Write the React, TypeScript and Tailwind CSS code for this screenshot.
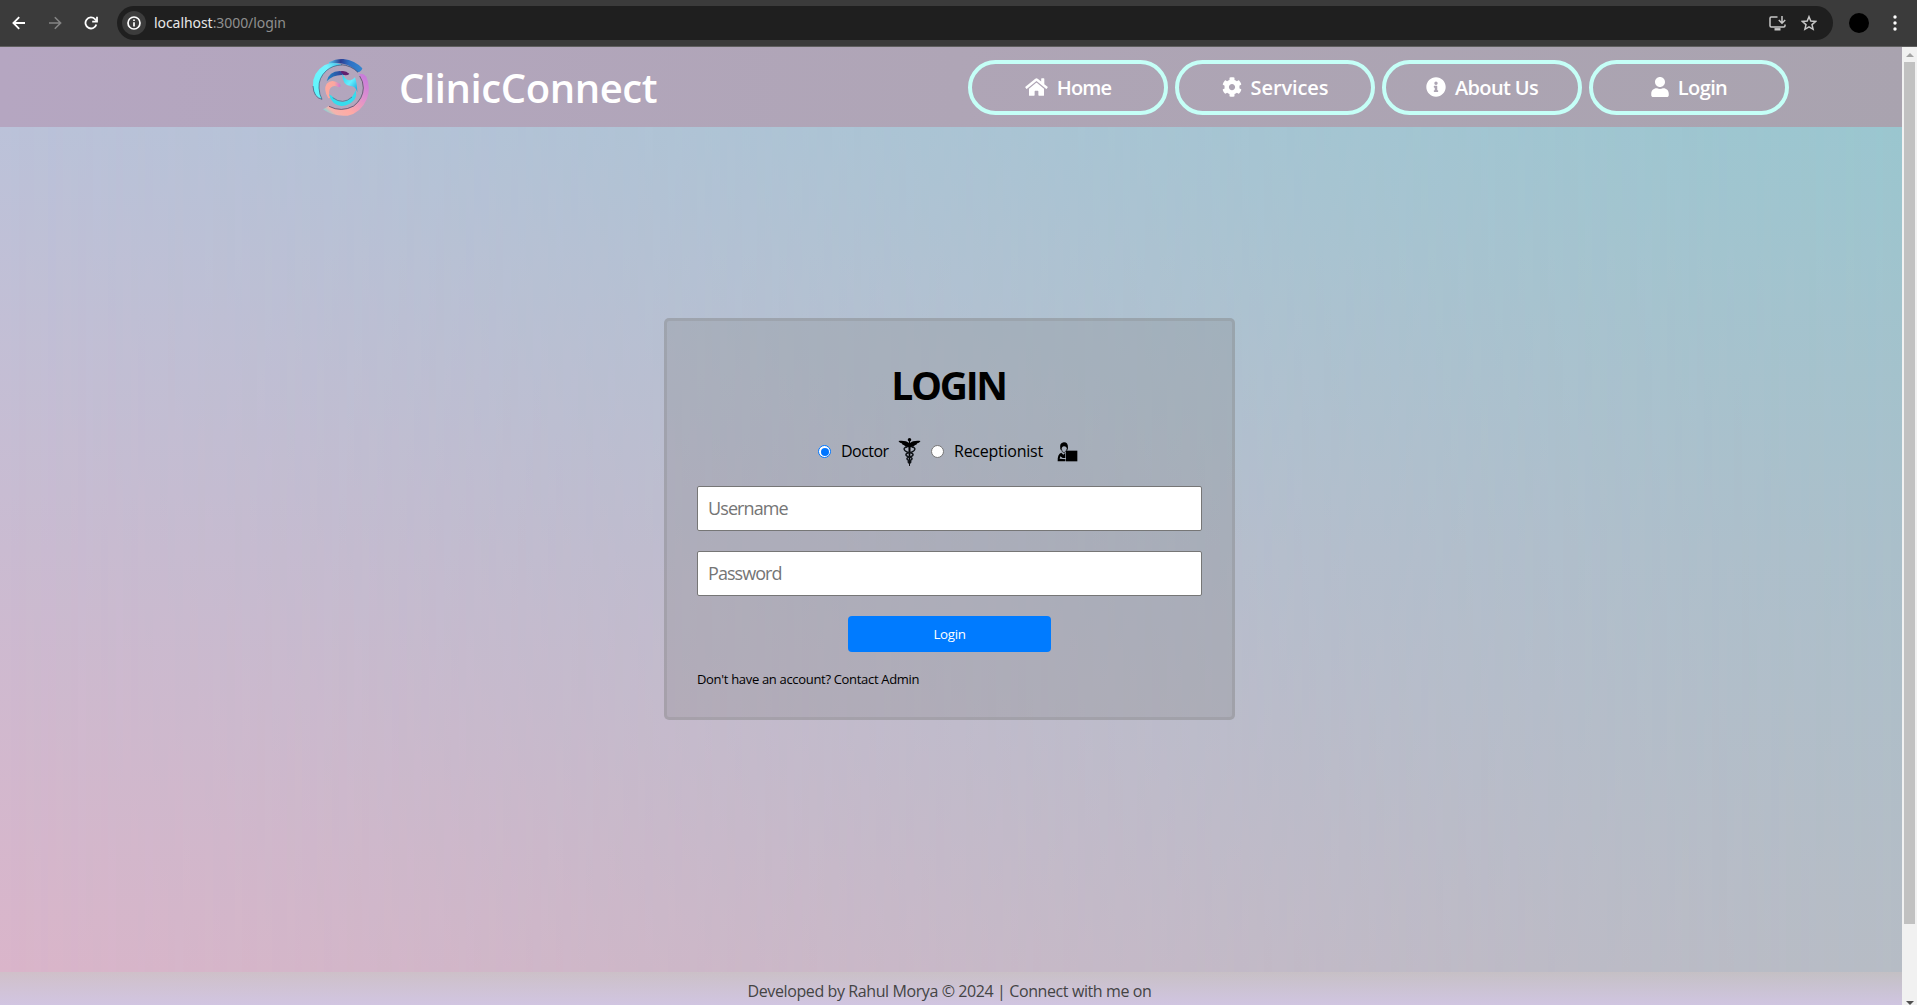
import type { ReactNode } from "react";
import { FaCog, FaHome, FaInfoCircle, FaUser } from "react-icons/fa";

function BrowserBar() {
  return (
    <div className="flex h-[47px] shrink-0 items-center border-b border-[#5f5f5f] bg-[#3b3b3b] font-['Noto_Sans',sans-serif]">
      <div className="flex w-[117px] items-center pl-3 text-white">
        <svg className="h-[14px] w-[14px]" viewBox="0 0 14 14" fill="none" stroke="currentColor" strokeWidth="1.8">
          <path d="M13 7H2M7.2 1.2 1.4 7l5.8 5.8" />
        </svg>
        <svg className="ml-[22px] h-[14px] w-[14px] text-[#858585]" viewBox="0 0 14 14" fill="none" stroke="currentColor" strokeWidth="1.6">
          <path d="M1 7h11M6.8 1.2 12.6 7l-5.8 5.8" />
        </svg>
        <svg className="ml-[22px] h-[14px] w-[14px]" viewBox="0 0 14 14" fill="none" stroke="currentColor" strokeWidth="1.8">
          <path d="M12.3 8.4A5.5 5.5 0 1 1 11 3.2l1.6 1.6" />
          <path d="M13 .8v4.8H8.2" />
        </svg>
      </div>
      <div className="flex h-[34px] w-[1716px] items-center rounded-full bg-[#1f1f1f] pl-[5px] pr-4">
        <div className="flex h-6 w-6 items-center justify-center rounded-full bg-[#3c3c3c] text-white">
          <svg className="h-[14px] w-[14px]" viewBox="0 0 14 14" fill="none" stroke="currentColor" strokeWidth="1.7">
            <circle cx="7" cy="7" r="6" />
            <path d="M7 6.2v4.2M7 3.4v1.7" />
          </svg>
        </div>
        <p className="ml-[8px] text-sm leading-5 tracking-[-0.06px] text-[#8f8f8f]">
          <span className="text-[#e8e8e8]">localhost</span>:3000/login
        </p>
        <svg className="ml-auto h-[15px] w-[17px] text-[#c7c7c7]" viewBox="0 0 17 15" fill="none" stroke="currentColor" strokeWidth="1.5">
          <path d="M8.5 1H2.2Q1 1 1 2.2v7.6Q1 11 2.2 11h12.6Q16 11 16 9.800V8.500" />
          <path d="M13 0v7M9.800 4l3.200 3.200L16.200 4" />
          <path d="M5.500 13.300h6" strokeWidth="2.400" />
        </svg>
        <svg className="ml-[15px] h-4 w-4 text-[#c7c7c7]" viewBox="0 0 16 16" fill="none" stroke="currentColor" strokeWidth="1.5">
          <path d="m8 1.700 1.800 4.400 4.800.4-3.600 3.100 1.100 4.700L8 11.800l-4.100 2.500L5 9.600 1.400 6.500l4.800-.4z" />
        </svg>
      </div>
      <div className="ml-4 h-5 w-5 rounded-full bg-black" />
      <svg className="ml-[24px] h-4 w-1" viewBox="0 0 4 16" fill="#fff">
        <circle cx="2" cy="2" r="1.700" />
        <circle cx="2" cy="8" r="1.700" />
        <circle cx="2" cy="14" r="1.700" />
      </svg>
    </div>
  );
}

function Logo() {
  return (
    <svg className="h-[75px] w-20" viewBox="0 0 240 225">
      <defs>
        <linearGradient id="ringBlue" x1="0" x2="1" y1="0" y2="0">
          <stop offset="0" stopColor="#55c8ee" />
          <stop offset=".35" stopColor="#2b3d92" />
          <stop offset=".6" stopColor="#2d6fc4" />
          <stop offset="1" stopColor="#3487cf" />
        </linearGradient>
        <linearGradient id="ringCyan" x1="0" x2="1" y1="1" y2="0">
          <stop offset="0" stopColor="#5cf6fb" />
          <stop offset=".7" stopColor="#74f2ff" />
          <stop offset="1" stopColor="#38b9e8" />
        </linearGradient>
        <linearGradient id="ringPink" x1="1" x2="0.05" y1="0" y2="1">
          <stop offset="0" stopColor="#c476dd" />
          <stop offset=".35" stopColor="#dd8fd0" />
          <stop offset=".68" stopColor="#ffaaa4" />
          <stop offset=".86" stopColor="#f4b3ad" />
          <stop offset="1" stopColor="#38eaf2" />
        </linearGradient>
        <linearGradient id="waveBlue" x1="0" x2="1" y1="0" y2="0">
          <stop offset="0" stopColor="#1f86c8" />
          <stop offset=".6" stopColor="#2f4a9e" />
          <stop offset="1" stopColor="#68216f" />
        </linearGradient>
        <linearGradient id="wavePink" x1="0" x2="1" y1="0" y2="0">
          <stop offset="0" stopColor="#ffaaa0" />
          <stop offset=".6" stopColor="#fba79f" />
          <stop offset="1" stopColor="#c878d8" />
        </linearGradient>
        <linearGradient id="waveCyan" x1="0" x2="1" y1="0" y2="1">
          <stop offset="0" stopColor="#2bd0e8" />
          <stop offset=".5" stopColor="#66efff" />
          <stop offset="1" stopColor="#0f9ed8" />
        </linearGradient>
      </defs>
      <path d="M84 37Q104 26 127 27Q162 31 184 55Q182 64 171 67Q154 47 126 41Q105 37 84 41Z" fill="url(#ringBlue)" />
      <path d="M171 67Q150 46 120 44" fill="none" stroke="#253b66" strokeWidth="2" />
      <path d="M63 148Q38 140 36 108Q34 68 70 46Q96 33 122 44Q94 46 76 62Q52 84 54 114Q55 134 63 148Z" fill="url(#ringCyan)" />
      <path d="M122 45Q94 46 76 62Q52 84 54 114Q55 134 63 148Q38 143 36 108" fill="none" stroke="#28486b" strokeWidth="1.800" />
      <path d="M173 73Q186 68 196 80Q210 112 198 146Q180 188 140 197Q98 201 66 178L84 168Q121 190 157 170Q190 149 188 110Q186 88 173 73Z" fill="url(#ringPink)" />
      <path d="M176 78Q187 94 187 114Q186 146 158 168Q121 188 84 169" fill="none" stroke="#4b3757" strokeWidth="2" />
      <path d="M77 94Q84 64 116 63L145 71Q139 76 126 75Q98 73 77 94Z" fill="url(#waveBlue)" />
      <path d="M118 64Q134 60 145 72Q134 79 126 73Z" fill="#62206e" />
      <path d="M124 71Q134 92 148 91Q156 89 162 82Q168 98 169 127Q163 107 148 108Q124 105 124 71Z" fill="url(#waveCyan)" />
      <path d="M82 145Q66 118 77 101Q92 85 116 101Q123 110 112 112Q99 103 89 113Q81 122 87 144Z" fill="url(#wavePink)" />
      <path d="M84 133Q94 137 100 147Q125 166 150 144Q162 129 163 120Q169 134 161 148Q144 169 121 168Q92 165 84 133Z" fill="#35dced" />
      <path d="M95 143Q126 166 153 141" fill="none" stroke="#156c87" strokeWidth="1.800" />
    </svg>
  );
}

function NavButton({ icon, children }: { icon: ReactNode; children: ReactNode }) {
  return (
    <a className="flex h-[55px] w-[200px] items-center justify-center gap-[9px] rounded-full border-4 border-[#c5fff7] text-xl font-semibold text-white">
      <span className="mb-[1px]">{icon}</span>
      <span className="mt-[2px]">{children}</span>
    </a>
  );
}

function Header() {
  return (
    <header className="relative flex h-20 shrink-0 items-center bg-linear-to-r from-[#b5a6c1] via-[#afa5b6] to-[#a9a3af]">
      <div className="ml-[301px] flex w-[667px] items-center">
        <Logo />
        <h1 className="mt-[1px] ml-[18px] text-[40px] leading-none font-semibold tracking-[-0.4px] text-white">ClinicConnect</h1>
      </div>
      <nav className="flex gap-[7px]">
        <NavButton icon={<FaHome className="h-5 w-[23px]" />}><span className="tracking-[-0.8px]">Home</span></NavButton>
        <NavButton icon={<FaCog />}><span className="tracking-[-0.1px]">Services</span></NavButton>
        <NavButton icon={<FaInfoCircle />}><span className="tracking-[-0.65px]">About Us</span></NavButton>
        <NavButton icon={<FaUser className="h-5 w-[18px]" />}><span className="tracking-[-0.6px]">Login</span></NavButton>
      </nav>
    </header>
  );
}

function Caduceus() {
  return (
    <svg className="h-7 w-[23px] shrink-0" viewBox="0 0 46 56">
      <circle cx="23" cy="3.500" r="3.500" />
      <path d="M23 11C18 6 10 5 1 6c2 3 4 4 7 5 0 2 3 3 5 4 1 2 4 3 8 3l2 1 2-1c4 0 7-1 8-3 2-1 5-2 5-4 3-1 5-2 7-5-9-1-17 0-22 5z" />
      <path d="M22 6h2l1.200 12L23.800 56h-1.600L20.800 18z" />
      <path d="M19 18c-10 0-9 9 4 11 10 2 9 7 0 9-7 2-7 5 0 7 4 2 3 4 0 6M27 18c10 0 9 9-4 11-10 2-9 7 0 9 7 2 7 5 0 7-4 2-3 4 0 6" fill="none" stroke="#101418" strokeWidth="3" />
    </svg>
  );
}

function Receptionist() {
  return (
    <svg className="h-5 w-[21px] shrink-0" viewBox="0 0 63 60">
      <path d="M10 22Q6 3 20 1Q33 0 33 17L31 26Q30 13 21 13Q14 13 13 25Z" />
      <path d="M13 20Q14 31 21 32Q28 31 30 20" fill="none" stroke="#000" strokeWidth="2" />
      <path d="M2 58Q1 35 13 32L19 38L25 32V48H17L10 43L8 50L25 52V58Z" />
      <path d="M27 26H61V58H27Z" />
      <path d="M3 54H25" stroke="#000" strokeWidth="3" />
    </svg>
  );
}

function Radio({ checked }: { checked?: boolean }) {
  return checked ? (
    <span className="flex h-[13px] w-[13px] shrink-0 items-center justify-center rounded-full border border-[#0075ff] bg-white">
      <span className="block h-[8px] w-[8px] rounded-full bg-[#0075ff]" />
    </span>
  ) : (
    <span className="ml-[10px] block h-[13px] w-[13px] shrink-0 rounded-full border border-[#767676] bg-white" />
  );
}

function LoginCard() {
  return (
    <form className="relative mr-[3px] flex h-[402px] w-[571px] flex-col rounded-[5px] border-[3px] border-[#808080]/25 bg-[#808080]/25 px-[30px] pt-[41px] text-black">
      <h2 className="h-[43px] pt-[1px] pr-[2px] text-center text-[39px] leading-[43px] font-bold tracking-[-2.300px]">LOGIN</h2>
      <div className="mt-8 flex h-[29px] items-center pl-[121px] text-base">
        <Radio checked />
        <span className="-mt-[2px] ml-[10px] w-[57px] shrink-0 tracking-[-0.55px]">Doctor</span>
        <Caduceus />
        <Radio />
        <span className="-mt-[2px] ml-[10px] w-[103px] shrink-0 tracking-[-0.25px]">Receptionist</span>
        <Receptionist />
      </div>
      <input
        type="text"
        placeholder="Username"
        className="mt-5 h-[45px] w-[505px] shrink-0 rounded-[2px] border border-[#767676] bg-white px-[10px] pb-[2px] text-[18px] tracking-[-0.9px] placeholder:text-[#757575]"
      />
      <input
        type="password"
        placeholder="Password"
        className="mt-5 h-[45px] w-[505px] shrink-0 rounded-[2px] border border-[#767676] bg-white px-[10px] pb-[2px] text-[18px] tracking-[-0.95px] placeholder:text-[#757575]"
      />
      <button type="button" className="mt-5 h-9 w-[203px] shrink-0 self-center rounded-[4px] bg-[#007bff] pt-[2px] text-[13.333px] tracking-[-0.3px] text-white">
        Login
      </button>
      <p className="mt-[18px] text-[13px] leading-[18px] tracking-[-0.32px]">Don't have an account? Contact Admin</p>
    </form>
  );
}

function Scrollbar() {
  return (
    <div className="flex w-[15px] flex-col items-center overflow-hidden bg-[#f1f1f1]">
      <svg className="mt-[6px] h-1 w-2 shrink-0" viewBox="0 0 8 4"><path d="M4 0 8 4H0z" fill="#a3a3a3" /></svg>
      <div className="mt-[5px] h-[862px] w-[11px] shrink-0 bg-[#c1c1c1]" />
      <svg className="mt-[77px] h-1 w-2 shrink-0" viewBox="0 0 8 4"><path d="M0 0H8L4 4z" fill="#505050" /></svg>
    </div>
  );
}

export default function App() {
  return (
    <div className="flex h-[1005px] w-[1917px] flex-col overflow-hidden font-['Open_Sans',sans-serif]">
      <BrowserBar />
      <div className="flex min-h-0 flex-1">
        <div className="flex w-[1902px] flex-col">
          <Header />
          <main className="relative flex flex-1 flex-col items-center bg-linear-to-b from-[#bbc2d9] via-[#cabbd1] to-[#dab5ca] pt-[191px]">
            <div className="absolute inset-0 bg-linear-to-b from-[#9ac6cf] via-[#aabfca] to-[#b6bcc5] [mask-image:linear-gradient(to_right,transparent,black)]" />
            <LoginCard />
          </main>
          <footer className="relative h-[33px] shrink-0 bg-linear-to-r from-[#d0c0c9] to-[#c3c0c4]">
            <div className="h-[33px] bg-linear-to-b from-[#d2c6e6]/0 to-[#d2c6e6]/85 pr-[3px] text-center text-base leading-[38px] tracking-[-0.4px] text-[#444]">
              Developed by Rahul Morya © 2024 | Connect with me on
            </div>
          </footer>
        </div>
        <Scrollbar />
      </div>
    </div>
  );
}
